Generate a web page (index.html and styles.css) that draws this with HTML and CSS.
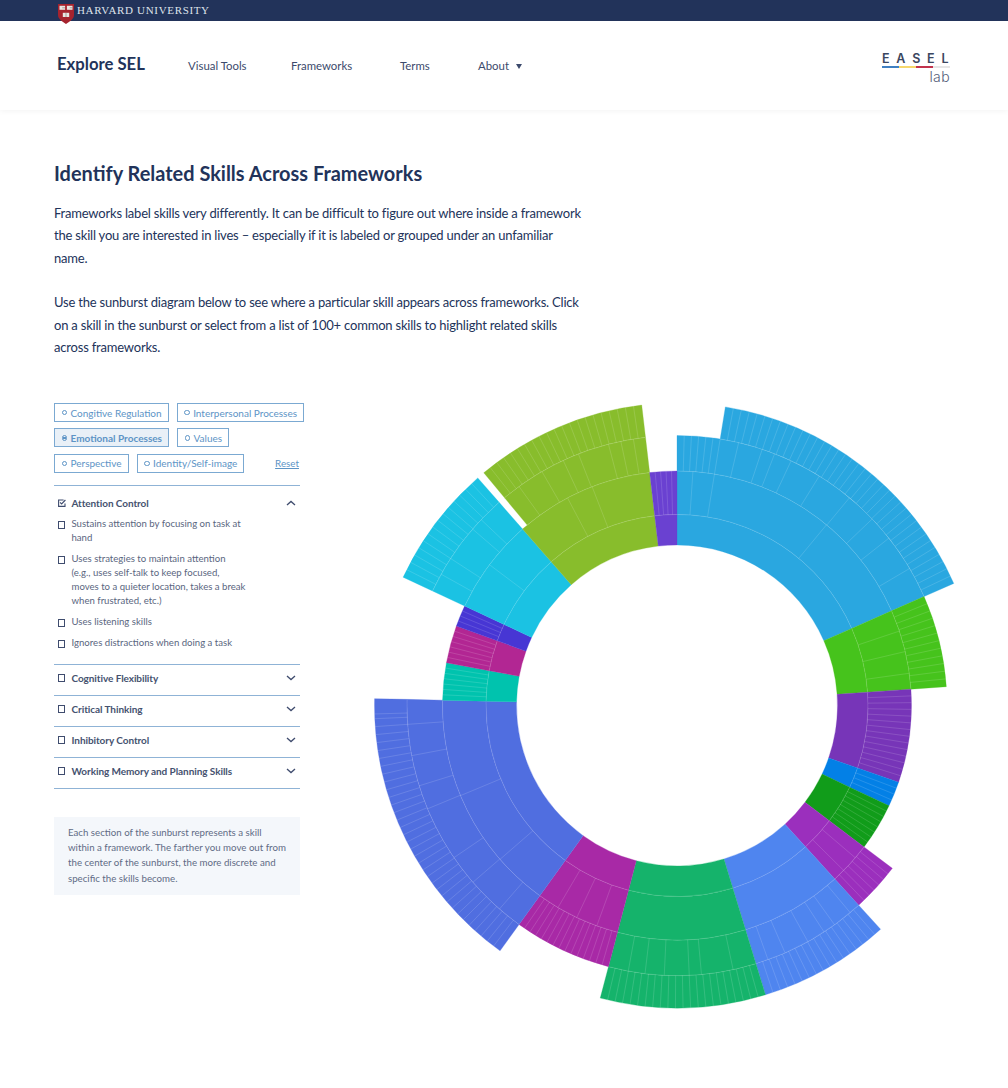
FILE: index.html
```html
<!DOCTYPE html>
<html lang="en">
<head>
<meta charset="utf-8">
<title>Explore SEL</title>
<link rel="stylesheet" href="styles.css">
</head>
<body>
<div class="topbar">
  <svg class="shield" viewBox="0 0 16 20" aria-hidden="true">
    <path d="M0 0H16V11C16 15 12 17 8 20C4 17 0 15 0 11Z" fill="#a6232e"/>
    <rect x="1.5" y="1.8" width="5.6" height="4" fill="#e9e6e2"/>
    <rect x="8.9" y="1.8" width="5.6" height="4" fill="#e9e6e2"/>
    <rect x="4.8" y="8.8" width="6.4" height="4.2" fill="#e9e6e2"/>
    <path d="M4.2 3.8H7M11.7 3.8H14.5M8 8.8V13" stroke="#8c8078" stroke-width=".7"/>
  </svg>
  <span class="harvard">HARVARD UNIVERSITY</span>
</div>
<header class="header">
  <a class="brand">Explore SEL</a>
  <nav class="nav">
    <a class="nav-visual">Visual Tools</a>
    <a class="nav-frameworks">Frameworks</a>
    <a class="nav-terms">Terms</a>
    <a class="nav-about">About <span class="caret"></span></a>
  </nav>
  <div class="easel">
    <div class="easel-word">EASEL</div>
    <div class="easel-bar"><i class="b1"></i><i class="b2"></i><i class="b3"></i><i class="b4"></i></div>
    <div class="easel-lab">lab</div>
  </div>
</header>
<main class="main">
  <h1 class="title">Identify Related Skills Across Frameworks</h1>
  <p class="lead">Frameworks label skills very differently. It can be difficult to figure out where inside a framework the skill you are interested in lives – especially if it is labeled or grouped under an unfamiliar name.</p>
  <p class="lead second">Use the sunburst diagram below to see where a particular skill appears across frameworks. Click on a skill in the sunburst or select from a list of 100+ common skills to highlight related skills across frameworks.</p>
  <section class="explorer">
    <aside class="sidebar">
      <div class="tags">
        <div class="tag-row">
          <span class="tag"><i class="radio"></i>Congitive Regulation</span>
          <span class="tag"><i class="radio"></i>Interpersonal Processes</span>
        </div>
        <div class="tag-row">
          <span class="tag active"><i class="radio"></i>Emotional Processes</span>
          <span class="tag"><i class="radio"></i>Values</span>
        </div>
        <div class="tag-row">
          <span class="tag"><i class="radio"></i>Perspective</span>
          <span class="tag"><i class="radio"></i>Identity/Self-image</span>
          <a class="reset">Reset</a>
        </div>
      </div>
      <div class="accordion">
        <div class="acc-item open">
          <div class="acc-head">
            <svg class="check" viewBox="0 0 8 8" aria-hidden="true"><path d="M7 4.5V7.4H.6V1H5.6" fill="none" stroke="#3f4c6e" stroke-width="1.1"/><path d="M2 3.4L3.6 5L7.4 1" fill="none" stroke="#3f4c6e" stroke-width="1.1"/></svg>
            <span class="acc-title">Attention Control</span>
            <svg class="chev" viewBox="0 0 10 6" aria-hidden="true"><path d="M1 5L5 1.4L9 5" fill="none" stroke="#3f4c6e" stroke-width="1.3"/></svg>
          </div>
          <ul class="skills">
            <li><i class="box"></i><span>Sustains attention by focusing on task at<br>hand</span></li>
            <li><i class="box"></i><span>Uses strategies to maintain attention<br>(e.g., uses self-talk to keep focused,<br>moves to a quieter location, takes a break<br>when frustrated, etc.)</span></li>
            <li><i class="box"></i><span>Uses listening skills</span></li>
            <li><i class="box"></i><span>Ignores distractions when doing a task</span></li>
          </ul>
        </div>
        <div class="acc-item">
          <div class="acc-head">
            <i class="box"></i><span class="acc-title">Cognitive Flexibility</span>
            <svg class="chev" viewBox="0 0 10 6" aria-hidden="true"><path d="M1 1L5 4.6L9 1" fill="none" stroke="#3f4c6e" stroke-width="1.3"/></svg>
          </div>
        </div>
        <div class="acc-item">
          <div class="acc-head">
            <i class="box"></i><span class="acc-title">Critical Thinking</span>
            <svg class="chev" viewBox="0 0 10 6" aria-hidden="true"><path d="M1 1L5 4.6L9 1" fill="none" stroke="#3f4c6e" stroke-width="1.3"/></svg>
          </div>
        </div>
        <div class="acc-item">
          <div class="acc-head">
            <i class="box"></i><span class="acc-title">Inhibitory Control</span>
            <svg class="chev" viewBox="0 0 10 6" aria-hidden="true"><path d="M1 1L5 4.6L9 1" fill="none" stroke="#3f4c6e" stroke-width="1.3"/></svg>
          </div>
        </div>
        <div class="acc-item">
          <div class="acc-head">
            <i class="box"></i><span class="acc-title">Working Memory and Planning Skills</span>
            <svg class="chev" viewBox="0 0 10 6" aria-hidden="true"><path d="M1 1L5 4.6L9 1" fill="none" stroke="#3f4c6e" stroke-width="1.3"/></svg>
          </div>
        </div>
      </div>
      <div class="note">Each section of the sunburst represents a skill within a framework. The farther you move out from the center of the sunburst, the more discrete and specific the skills become.</div>
    </aside>
    <svg id="sunburst" class="sunburst" viewBox="-317 -302.5 620 620" aria-label="Sunburst diagram"></svg>
  </section>
</main>
<script src="sunburst.js"></script>
</body>
</html>
```
FILE: styles.css
```css
* { box-sizing: border-box; }
html, body { margin: 0; padding: 0; }
body {
  background: #fff;
  color: #22335a;
  font-family: Lato, "Liberation Sans", sans-serif;
}
.topbar {
  height: 21px;
  background: #22335a;
  display: flex;
  align-items: flex-start;
  padding-left: 58px;
  gap: 3px;
  position: relative;
  z-index: 1;
}
.shield { width: 16px; height: 20px; margin-top: 4px; margin-bottom: -3px; flex: none; }
.harvard {
  font-family: "Liberation Serif", serif;
  font-size: 11px;
  line-height: 20px;
  letter-spacing: .66px;
  color: #dfe3ea;
}
.header {
  height: 89px;
  background: #fff;
  box-shadow: 0 1px 6px rgba(0, 0, 0, .05);
  display: flex;
  align-items: center;
  padding: 0 58px 0 57px;
}
.brand { font-size: 16.7px; font-weight: 700; color: #22335a; margin-top: -4px; width: 131px; }
.nav { display: flex; font-size: 11.4px; color: #3c4a6c; }
.nav a { display: block; margin-top: -1px; }
.nav-visual { width: 103px; }
.nav-frameworks { width: 109px; }
.nav-terms { width: 78px; }
.caret {
  display: inline-block;
  width: 0; height: 0;
  margin-left: 4px;
  vertical-align: 1px;
  border-left: 3px solid transparent;
  border-right: 3px solid transparent;
  border-top: 5px solid #3c4a6c;
}
.easel { margin-left: auto; width: 68px; margin-top: 5px; }
.easel-word {
  font-family: Inter, "Liberation Sans", sans-serif;
  font-size: 12.5px;
  font-weight: 600;
  line-height: 13px;
  letter-spacing: 6.8px;
  color: #3b4660;
  white-space: nowrap;
}
.easel-bar { display: flex; height: 2px; margin-top: 1px; }
.easel-bar i { flex: 1; }
.b1 { background: #3f7fc1; }
.b2 { background: #f6d76b; }
.b3 { background: #c2334d; }
.b4 { background: #e6e6e6; }
.easel-lab {
  font-family: Inter, "Liberation Sans", sans-serif;
  font-size: 14px;
  font-weight: 300;
  line-height: 16px;
  letter-spacing: .4px;
  margin-top: 1px;
  text-align: right;
  color: #55607a;
}
.main { padding: 50px 0 0 54px; }
.title { margin: 0 0 16px; font-size: 19.95px; line-height: 26px; font-weight: 700; color: #22335a; }
.lead { margin: 0; width: 532px; font-size: 13px; letter-spacing: -.2px; line-height: 22.4px; color: #22335a; }
.second { margin-top: 22px; }
.explorer { display: flex; margin-top: 44.6px; align-items: flex-start; }
.sidebar { width: 246px; flex: none; }
.sunburst { width: 620px; height: 620px; flex: none; margin-left: 60px; display: block; }
.tags { height: 82px; }
.tag-row { display: flex; height: 25.4px; align-items: flex-start; gap: 8px; }
.tag {
  display: inline-flex;
  align-items: center;
  height: 19px;
  padding: 0 6px 0 6.5px;
  border: 1px solid #7ba9d2;
  font-size: 10px;
  color: #5d94c6;
  white-space: nowrap;
}
.tag.active { background: #e9f0f7; font-weight: 700; }
.radio {
  width: 5.5px; height: 5.5px;
  border: 1px solid #5d94c6;
  border-radius: 50%;
  margin-right: 3.5px;
  flex: none;
}
.tag.active .radio { background: radial-gradient(circle, #5d94c6 55%, transparent 60%); }
.reset {
  margin-left: auto;
  margin-top: 3px;
  margin-right: 1px;
  font-size: 9.8px;
  color: #5d94c6;
  text-decoration: underline;
}
.accordion { border-bottom: 1px solid #8fb3d6; }
.acc-item { border-top: 1px solid #8fb3d6; }
.acc-head {
  display: flex;
  align-items: center;
  height: 30px;
  padding: 0 4px 4px 3px;
}
.open .acc-head { height: 31px; padding: 3px 4px 0 3px; }
.acc-title { font-size: 10px; letter-spacing: -.07px; font-weight: 700; color: #45526f; }
.box {
  width: 7.5px; height: 7.5px;
  border: 1.2px solid #3f4c6e;
  margin-right: 6.5px;
  margin-left: .5px;
  flex: none;
}
.check { width: 8px; height: 8px; margin-right: 6px; margin-left: .5px; flex: none; }
.chev { width: 10px; height: 6px; margin-left: auto; flex: none; }
.skills { list-style: none; margin: 0; padding: 0 0 14px 3px; }
.skills li { display: flex; font-size: 9.6px; line-height: 14px; color: #5a6680; margin-bottom: 7px; }
.skills li:last-child { margin-bottom: 0; }
.skills .box { margin-top: 4px; }
.note {
  margin-top: 27.5px;
  padding: 8.5px 10px 9px 14px;
  background: #f4f7fb;
  font-size: 9.7px;
  line-height: 15.2px;
  color: #5f6b85;
}
```
FILE: sunburst.js
```js
(function () {
  var NS = 'http://www.w3.org/2000/svg';
  var svg = document.getElementById('sunburst');
  var R = [160.5, 191, 234.5, 270, 302.5];

  function range(from, to, step) {
    var out = [], n = Math.round((to - from) / step);
    for (var i = 1; i < n; i++) out.push(from + (to - from) * i / n);
    return out;
  }

  // Each ring: [from angle, to angle, ring index, dividing angles]
  var sectors = [
    ['#2aa7e0', [
      [0, 66.2, 0, []],
      [0, 66.2, 1, [3.9, 9.2, 39.6]],
      [0, 66.2, 2, range(0, 9.2, 1.5).concat([9.2, 13.2, 18.4, 21.2, 25, 31.8, 39.7, 46.3, 51.7, 59.5])],
      [9.2, 66.2, 3, range(9.2, 66.2, 1.55)]
    ]],
    ['#46c31c', [
      [66.2, 86, 0, []],
      [66.2, 86, 1, [71.5, 76.7, 82.1]],
      [66.2, 86, 2, range(66.2, 86, 1.65)]
    ]],
    ['#7735b8', [
      [86, 109.1, 0, []],
      [86, 109.1, 1, range(86, 109.1, 1.7)]
    ]],
    ['#0380e6', [
      [109.1, 115.3, 0, []],
      [109.1, 115.3, 1, range(109.1, 115.3, 1.5)]
    ]],
    ['#119c1a', [
      [115.3, 127.1, 0, []],
      [115.3, 127.1, 1, range(115.3, 127.1, 1.45)]
    ]],
    ['#9b2fbd', [
      [127.1, 137.7, 0, []],
      [127.1, 137.7, 1, [130.5, 134.7]],
      [127.1, 137.7, 2, range(127.1, 137.7, 1.5)]
    ]],
    ['#4f85ef', [
      [137.7, 163, 0, []],
      [137.7, 163, 1, []],
      [137.7, 163, 2, [140.1, 144.3, 147, 151, 156.4, 160.3]],
      [137.7, 163, 3, range(137.7, 163, 1.5)]
    ]],
    ['#15b36b', [
      [163, 194.7, 0, []],
      [163, 194.7, 1, []],
      [163, 194.7, 2, [168, 174.8, 177.4, 182.7, 186.8, 190.4]],
      [163, 194.7, 3, range(163, 194.7, 1.45)]
    ]],
    ['#a829a6', [
      [194.7, 215.8, 0, []],
      [194.7, 215.8, 1, [200, 205.3, 210.5]],
      [194.7, 215.8, 2, range(194.7, 215.8, 1.4)]
    ]],
    ['#506ee0', [
      [215.8, 271.3, 0, []],
      [215.8, 271.3, 1, [229, 247.4]],
      [215.8, 271.3, 2, [221.1, 229.1, 235.7, 247.5, 252.7, 259.3, 266]],
      [215.8, 271.3, 3, range(215.8, 266, 1.5).concat([266, 267.5, 268.4])]
    ]],
    ['#00c3ae', [
      [271.3, 280.5, 0, []],
      [271.3, 280.5, 1, range(271.3, 280.5, 1.3)]
    ]],
    ['#b22693', [
      [280.5, 289.8, 0, []],
      [280.5, 289.8, 1, range(280.5, 289.8, 1.4)]
    ]],
    ['#4736d4', [
      [289.8, 295.1, 0, []],
      [289.8, 295.1, 1, range(289.8, 295.1, 1.4)]
    ]],
    ['#1bc2e3', [
      [295.1, 318.8, 0, []],
      [295.1, 318.8, 1, [306.9]],
      [295.1, 318.8, 2, [299.1, 303, 310.8, 313.5]],
      [295.1, 318.8, 3, range(295.1, 318.8, 1.55)]
    ]],
    ['#88bd2c', [
      [318.8, 353.3, 0, []],
      [318.8, 353.3, 1, [332.2, 338.8]],
      [320.3, 353.3, 2, [324.2, 330, 335.1, 338.6, 345.3, 348, 350.7]],
      [320.3, 353.3, 3, range(320.3, 353.3, 1.6)]
    ]],
    ['#6a41d1', [
      [353.3, 360, 0, []],
      [353.3, 360, 1, range(353.3, 360, 1.3)]
    ]]
  ];

  function pt(r, a) {
    var t = a * Math.PI / 180;
    return (r * Math.sin(t)).toFixed(2) + ' ' + (-r * Math.cos(t)).toFixed(2);
  }
  function add(name, attrs, parent) {
    var el = document.createElementNS(NS, name);
    for (var k in attrs) el.setAttribute(k, attrs[k]);
    parent.appendChild(el);
    return el;
  }
  function arc(r, a0, a1) {
    return 'A' + r + ' ' + r + ' 0 ' + (a1 - a0 > 180 ? 1 : 0) + ' 1 ' + pt(r, a1);
  }

  sectors.forEach(function (sector) {
    var color = sector[0];
    var g = add('g', { 'class': 'sector' }, svg);
    sector[1].forEach(function (ring) {
      var a0 = ring[0], a1 = ring[1], r0 = R[ring[2]], r1 = R[ring[2] + 1];
      var d = 'M' + pt(r0, a0) + ' L' + pt(r1, a0) + ' ' + arc(r1, a0, a1) +
              ' L' + pt(r0, a1) + ' A' + r0 + ' ' + r0 + ' 0 0 0 ' + pt(r0, a0) + 'Z';
      add('path', { d: d, fill: color, stroke: color, 'stroke-width': '.3' }, g);
    });
    sector[1].forEach(function (ring) {
      var a0 = ring[0], a1 = ring[1], r0 = R[ring[2]], r1 = R[ring[2] + 1];
      var d = '';
      ring[3].forEach(function (a) {
        d += 'M' + pt(r0, a) + ' L' + pt(r1, a) + ' ';
      });
      if (ring[2] > 0) d += 'M' + pt(r0, a0) + ' ' + arc(r0, a0, a1);
      if (d) add('path', { d: d, fill: 'none', stroke: '#fff', 'stroke-opacity': '.2', 'stroke-width': '.7' }, g);
    });
  });
})();
```
